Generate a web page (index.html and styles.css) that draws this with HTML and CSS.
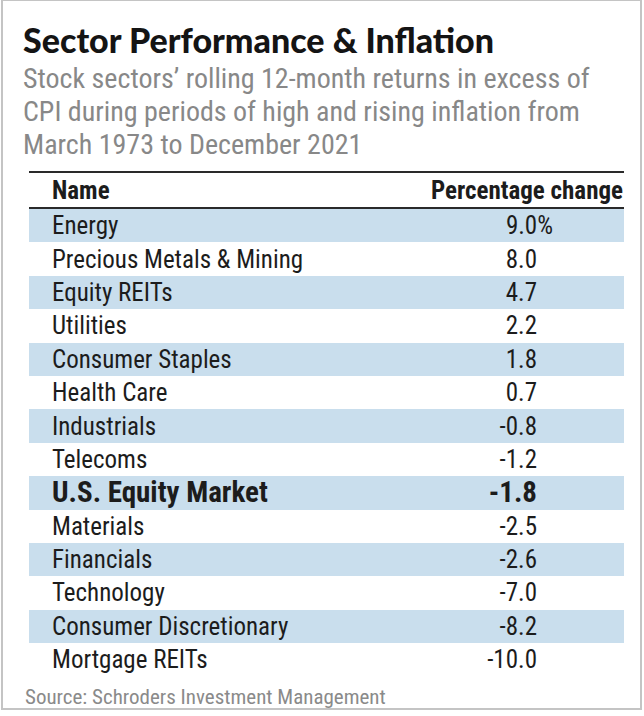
FILE: index.html
```html
<!DOCTYPE html>
<html lang="en">
<head>
<meta charset="utf-8">
<title>Sector Performance &amp; Inflation</title>
<link rel="stylesheet" href="styles.css">
</head>
<body>
<div class="card">
  <h1 class="title">Sector Performance &amp; Inflation</h1>
  <p class="subtitle">Stock sectors’ rolling 12-month returns in excess of CPI during periods of high and rising inflation from March 1973 to December 2021</p>
  <table class="data">
    <thead>
      <tr><th class="name">Name</th><th class="val">Percentage change</th></tr>
    </thead>
    <tbody>
      <tr class="band"><td class="name">Energy</td><td class="val">9.0<span class="pct">%</span></td></tr>
      <tr><td class="name">Precious Metals &amp; Mining</td><td class="val">8.0</td></tr>
      <tr class="band"><td class="name">Equity REITs</td><td class="val">4.7</td></tr>
      <tr><td class="name">Utilities</td><td class="val">2.2</td></tr>
      <tr class="band"><td class="name">Consumer Staples</td><td class="val">1.8</td></tr>
      <tr><td class="name">Health Care</td><td class="val">0.7</td></tr>
      <tr class="band"><td class="name">Industrials</td><td class="val">-0.8</td></tr>
      <tr><td class="name">Telecoms</td><td class="val">-1.2</td></tr>
      <tr class="band strong"><td class="name">U.S. Equity Market</td><td class="val">-1.8</td></tr>
      <tr><td class="name">Materials</td><td class="val">-2.5</td></tr>
      <tr class="band"><td class="name">Financials</td><td class="val">-2.6</td></tr>
      <tr><td class="name">Technology</td><td class="val">-7.0</td></tr>
      <tr class="band"><td class="name">Consumer Discretionary</td><td class="val">-8.2</td></tr>
      <tr><td class="name">Mortgage REITs</td><td class="val">-10.0</td></tr>
    </tbody>
  </table>
  <p class="source">Source: Schroders Investment Management</p>
</div>
</body>
</html>
```
FILE: styles.css
```css
html, body {
  margin: 0;
  padding: 0;
  background: #ffffff;
}

.card {
  box-sizing: border-box;
  width: 641px;
  height: 710px;
  margin-left: 1px;
  border: 2px solid #c4c4c4;
  border-top-width: 1px;
  padding: 16px 16px 0 20px;
  background: #ffffff;
  font-family: "Roboto Condensed", "Liberation Sans Narrow", "Roboto", sans-serif;
}

.title {
  margin: 0;
  font-family: "Lato", "Liberation Sans", sans-serif;
  font-weight: 900;
  font-size: 34px;
  line-height: 45px;
  color: #141414;
}

.subtitle {
  width: 580px;
  margin: 0;
  font-size: 28px;
  line-height: 33px;
  color: #888888;
}

.data {
  width: 595px;
  margin: 10px 0 0 6px;
  border-collapse: collapse;
  color: #1c1c1c;
}

.data thead th {
  border-top: 2px solid #2a2a2a;
  border-bottom: 2px solid #2a2a2a;
  height: 34px;
  padding: 0;
  font-size: 25px;
  font-weight: 700;
  line-height: 1;
  color: #1c1c1c;
}

.data th.name {
  text-align: left;
  padding-left: 23px;
}

.data th.val {
  text-align: right;
  padding-right: 1px;
}

.data td {
  height: 33.4px;
  padding: 0;
  font-size: 25px;
  line-height: 1;
}

.data td.name {
  padding-left: 23px;
}

.data td.val {
  text-align: right;
  padding-right: 87px;
}

.pct {
  margin-right: -16px;
}

.band td {
  background: #c9deed;
}

.strong td {
  font-weight: 700;
  font-size: 29px;
}

.source {
  margin: 8px 0 0 2px;
  font-size: 21px;
  line-height: 26px;
  color: #8a8a8a;
}
```
